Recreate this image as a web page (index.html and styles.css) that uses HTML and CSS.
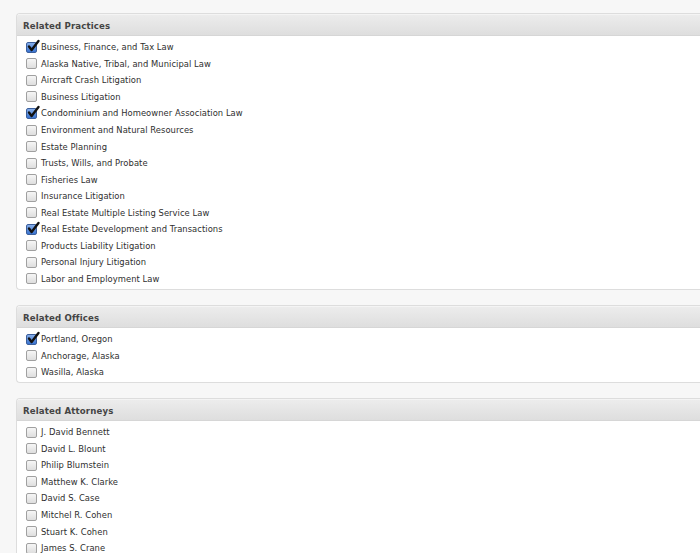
FILE: index.html
```html
<!DOCTYPE html>
<html>
<head>
<meta charset="utf-8">
<link rel="stylesheet" href="styles.css">
</head>
<body>
<div class="page">
  <section class="panel">
    <h2 class="panel-head">Related Practices</h2>
    <ul class="list">
      <li class="item"><span class="box checked"><svg viewBox="0 0 14 14"><path d="M3 6.5 L5.6 10 L12.5 1" /></svg></span>Business, Finance, and Tax Law</li>
      <li class="item"><span class="box"></span>Alaska Native, Tribal, and Municipal Law</li>
      <li class="item"><span class="box"></span>Aircraft Crash Litigation</li>
      <li class="item"><span class="box"></span>Business Litigation</li>
      <li class="item"><span class="box checked"><svg viewBox="0 0 14 14"><path d="M3 6.5 L5.6 10 L12.5 1" /></svg></span>Condominium and Homeowner Association Law</li>
      <li class="item"><span class="box"></span>Environment and Natural Resources</li>
      <li class="item"><span class="box"></span>Estate Planning</li>
      <li class="item"><span class="box"></span>Trusts, Wills, and Probate</li>
      <li class="item"><span class="box"></span>Fisheries Law</li>
      <li class="item"><span class="box"></span>Insurance Litigation</li>
      <li class="item"><span class="box"></span>Real Estate Multiple Listing Service Law</li>
      <li class="item"><span class="box checked"><svg viewBox="0 0 14 14"><path d="M3 6.5 L5.6 10 L12.5 1" /></svg></span>Real Estate Development and Transactions</li>
      <li class="item"><span class="box"></span>Products Liability Litigation</li>
      <li class="item"><span class="box"></span>Personal Injury Litigation</li>
      <li class="item"><span class="box"></span>Labor and Employment Law</li>
    </ul>
  </section>
  <section class="panel">
    <h2 class="panel-head">Related Offices</h2>
    <ul class="list">
      <li class="item"><span class="box checked"><svg viewBox="0 0 14 14"><path d="M3 6.5 L5.6 10 L12.5 1" /></svg></span>Portland, Oregon</li>
      <li class="item"><span class="box"></span>Anchorage, Alaska</li>
      <li class="item"><span class="box"></span>Wasilla, Alaska</li>
    </ul>
  </section>
  <section class="panel">
    <h2 class="panel-head">Related Attorneys</h2>
    <ul class="list">
      <li class="item"><span class="box"></span>J. David Bennett</li>
      <li class="item"><span class="box"></span>David L. Blount</li>
      <li class="item"><span class="box"></span>Philip Blumstein</li>
      <li class="item"><span class="box"></span>Matthew K. Clarke</li>
      <li class="item"><span class="box"></span>David S. Case</li>
      <li class="item"><span class="box"></span>Mitchel R. Cohen</li>
      <li class="item"><span class="box"></span>Stuart K. Cohen</li>
      <li class="item"><span class="box"></span>James S. Crane</li>
    </ul>
  </section>
</div>
</body>
</html>
```

FILE: styles.css
```css
html, body {
  margin: 0;
  padding: 0;
  background: #f7f7f7;
  overflow: hidden;
}
.page {
  padding: 13px 0 0 16px;
  font-family: "DejaVu Sans", Verdana, sans-serif;
  font-size: 8.4px;
  color: #2e2e2e;
}
.panel {
  background: #fff;
  border: 1px solid #dddddd;
  border-right: none;
  border-radius: 4px 0 0 4px;
  margin: 0 0 15px 0;
  overflow: hidden;
}
.panel-head {
  margin: 0;
  height: 22px;
  line-height: 22px;
  padding-left: 6px;
  font-size: 8.6px;
  font-weight: bold;
  letter-spacing: 0.15px;
  color: #444;
  background: linear-gradient(#ececec, #dedede);
  border-top: 1px solid #f4f4f4;
  border-bottom: 1px solid #d6d6d6;
  box-sizing: border-box;
}
.list {
  list-style: none;
  margin: 0;
  padding: 3px 0 1.6px 9px;
}
.item {
  display: flex;
  align-items: center;
  gap: 4px;
  height: 16.55px;
  letter-spacing: 0.05px;
}
.box {
  position: relative;
  width: 11px;
  height: 11px;
  box-sizing: border-box;
  border: 1px solid #a0a0a0;
  border-radius: 2px;
  background: linear-gradient(#f6f6f6, #dedede);
  flex: none;
}
.box.checked {
  border-color: #3b5f9c;
  background: linear-gradient(#86aeea, #3a74d0);
}
.box svg {
  position: absolute;
  left: -1px;
  top: -3px;
  width: 14px;
  height: 14px;
  overflow: visible;
}
.box svg path {
  fill: none;
  stroke: #111;
  stroke-width: 2.4;
  stroke-linecap: round;
  stroke-linejoin: round;
}
```
